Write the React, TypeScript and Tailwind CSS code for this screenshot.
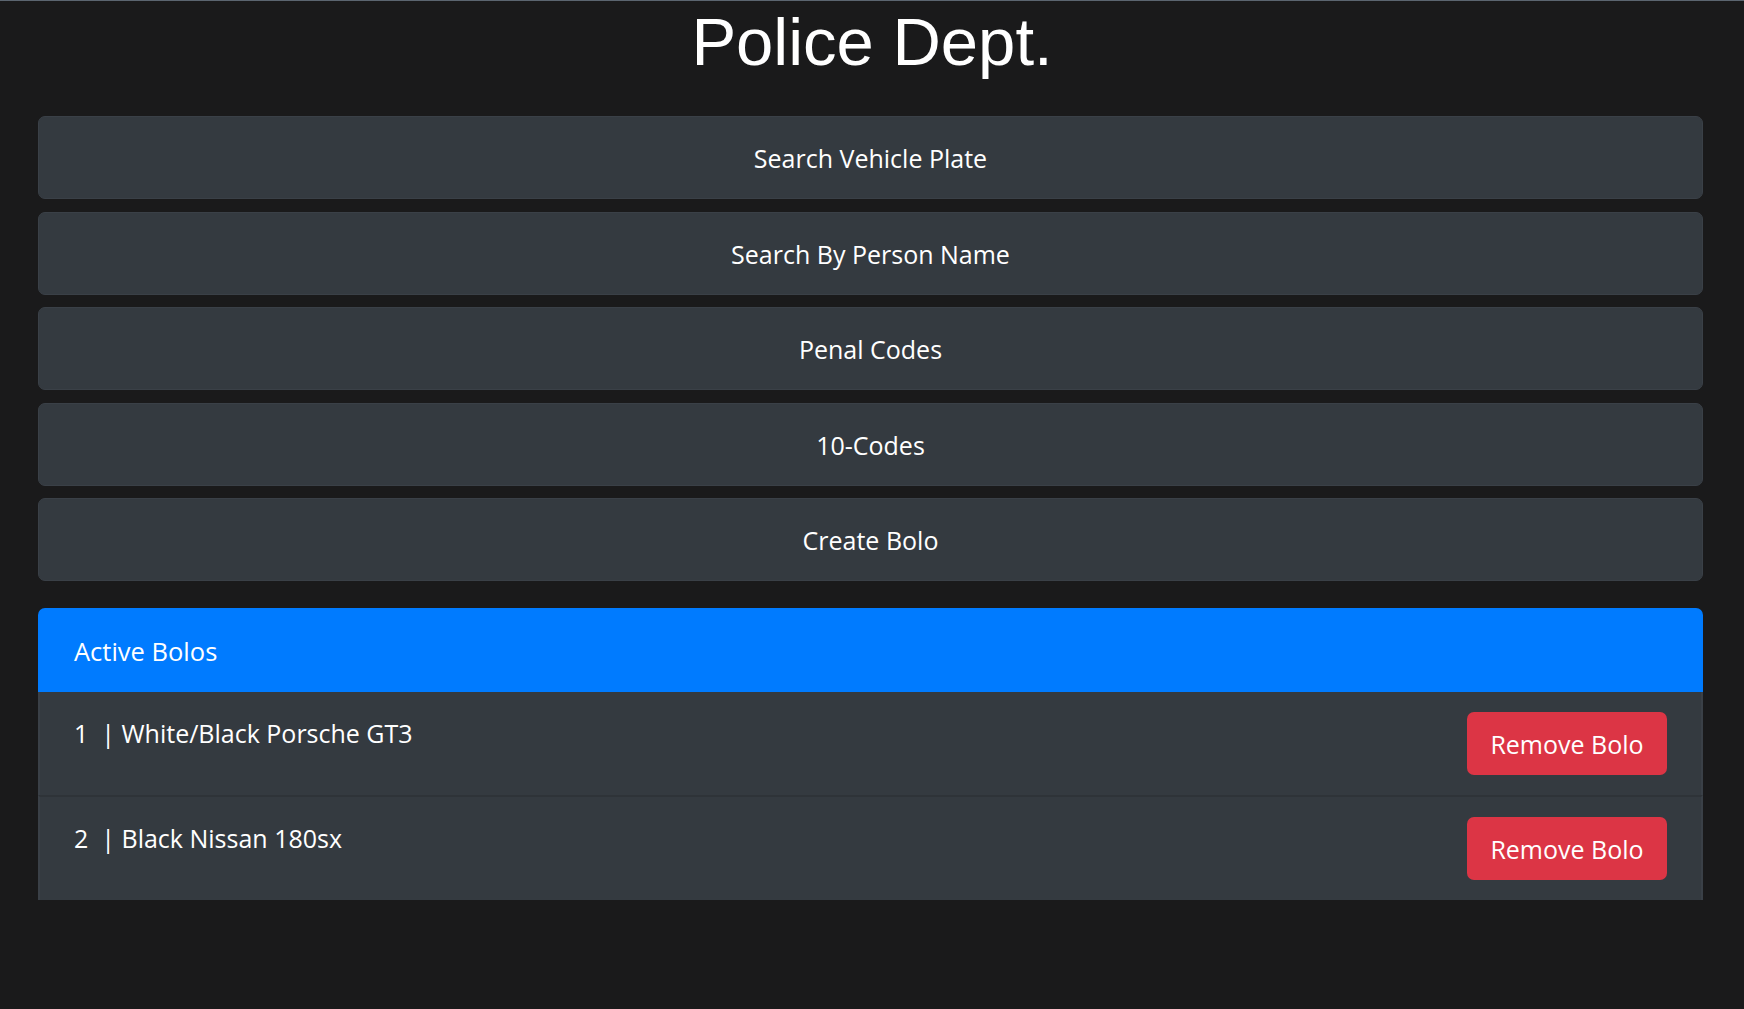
import { useState } from 'react';

const MENU = ['Search Vehicle Plate', 'Search By Person Name', 'Penal Codes', '10-Codes', 'Create Bolo'];

const INITIAL_BOLOS = [
  { id: 1, text: 'White/Black Porsche GT3' },
  { id: 2, text: 'Black Nissan 180sx' },
];

export default function App() {
  const [bolos, setBolos] = useState(INITIAL_BOLOS);

  return (
    <div className="min-h-screen bg-[#1a1a1b] border-t border-[#5b6570] font-['Open_Sans','Noto_Sans',sans-serif] text-white">
      <h1 className="pt-[7px] text-center font-['Liberation_Sans',Arial,sans-serif] text-[67px] leading-none font-normal">
        Police Dept.
      </h1>

      <div className="ml-[38px] mr-[41px] mt-[41px]">
        <div className="flex flex-col gap-[12.5px]">
          {MENU.map((label) => (
            <button
              key={label}
              className="h-[83px] w-full rounded-[7px] border border-[#3a4047] bg-[#343a40] pt-[3px] text-[25px] text-white hover:bg-[#23272b]"
            >
              {label}
            </button>
          ))}
        </div>

        <div className="mt-[27px] overflow-hidden rounded-t-[7px]">
          <div className="flex h-[84px] items-center bg-[#007bff] px-[36px] pt-[2px] text-[25.5px]">Active Bolos</div>
          {bolos.map((b, i) => (
            <div
              key={b.id}
              className={`flex items-start justify-between border-x-2 border-[#3a4047] bg-[#343a40] px-[34px] py-[20px] ${i > 0 ? 'border-t-2 border-t-[#2e3338]' : ''}`}
            >
              <span className="whitespace-pre pt-[3px] text-[25px] leading-[1.5]">{`${b.id}  | ${b.text}`}</span>
              <button
                onClick={() => setBolos(bolos.filter((x) => x.id !== b.id))}
                className="h-[63px] w-[200px] rounded-[7px] bg-[#dc3545] pt-[3px] text-[25px] text-white hover:bg-[#c82333]"
              >
                Remove Bolo
              </button>
            </div>
          ))}
        </div>
      </div>
    </div>
  );
}
